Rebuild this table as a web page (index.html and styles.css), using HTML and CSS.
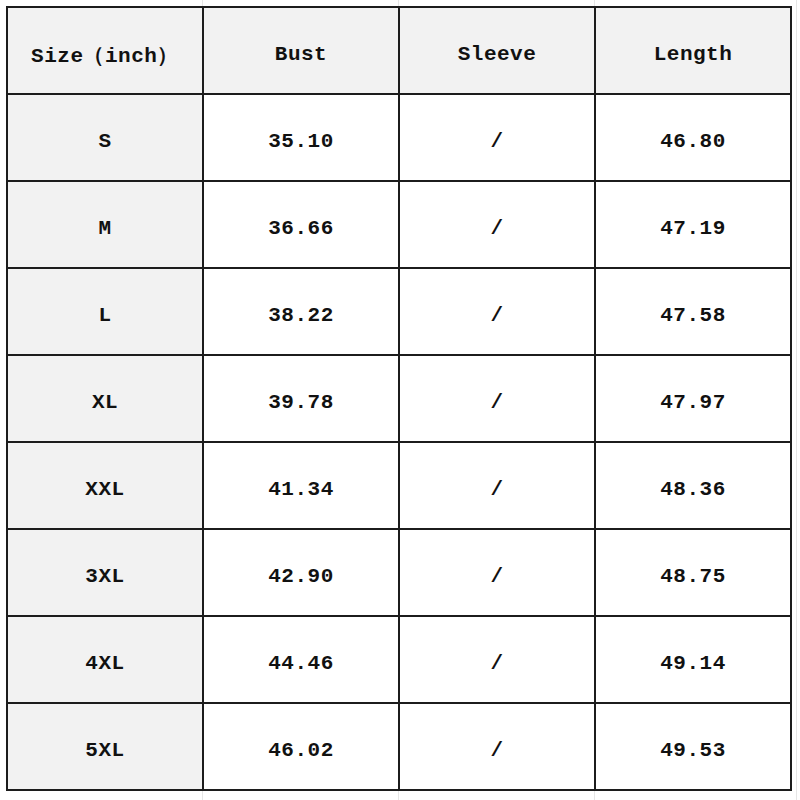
FILE: index.html
```html
<!DOCTYPE html>
<html>
<head>
<meta charset="utf-8">
<link rel="stylesheet" href="styles.css">
</head>
<body>
<div class="sheet">
  <div class="size-table">
    <div class="cell head">Size（inch）</div>
    <div class="cell head">Bust</div>
    <div class="cell head">Sleeve</div>
    <div class="cell head">Length</div>

    <div class="cell side">S</div><div class="cell">35.10</div><div class="cell">/</div><div class="cell">46.80</div>
    <div class="cell side">M</div><div class="cell">36.66</div><div class="cell">/</div><div class="cell">47.19</div>
    <div class="cell side">L</div><div class="cell">38.22</div><div class="cell">/</div><div class="cell">47.58</div>
    <div class="cell side">XL</div><div class="cell">39.78</div><div class="cell">/</div><div class="cell">47.97</div>
    <div class="cell side">XXL</div><div class="cell">41.34</div><div class="cell">/</div><div class="cell">48.36</div>
    <div class="cell side">3XL</div><div class="cell">42.90</div><div class="cell">/</div><div class="cell">48.75</div>
    <div class="cell side">4XL</div><div class="cell">44.46</div><div class="cell">/</div><div class="cell">49.14</div>
    <div class="cell side">5XL</div><div class="cell">46.02</div><div class="cell">/</div><div class="cell">49.53</div>
  </div>
</div>
</body>
</html>
```

FILE: styles.css
```css
html, body {
  margin: 0;
  padding: 0;
  background: #ffffff;
}

.sheet {
  width: 800px;
  height: 800px;
  padding: 6px 0 0 6px;
  box-sizing: border-box;
  background-color: #fff;
  background-image:
    linear-gradient(to right, transparent 202px, #e6e6e6 202px, #e6e6e6 203px, transparent 203px, transparent 398px, #e6e6e6 398px, #e6e6e6 399px, transparent 399px, transparent 594px, #e6e6e6 594px, #e6e6e6 595px, transparent 595px, transparent 796px, #e6e6e6 796px, #e6e6e6 797px, transparent 797px);
}

.size-table {
  display: grid;
  grid-template-columns: repeat(4, 196px);
  grid-template-rows: repeat(9, 87px);
  width: max-content;
  border-left: 2px solid #1c1c1c;
  border-top: 2px solid #1c1c1c;
  background: #fff;
}

.cell {
  display: flex;
  align-items: center;
  justify-content: center;
  border-right: 2px solid #1c1c1c;
  border-bottom: 2px solid #1c1c1c;
  background: #ffffff;
  font-family: "Liberation Mono", "DejaVu Sans Mono", monospace;
  font-weight: bold;
  font-size: 21px;
  letter-spacing: 0.5px;
  color: #111;
  padding-top: 8px;
  box-sizing: border-box;
}

.head,
.side {
  background: #f2f2f2;
}
```
